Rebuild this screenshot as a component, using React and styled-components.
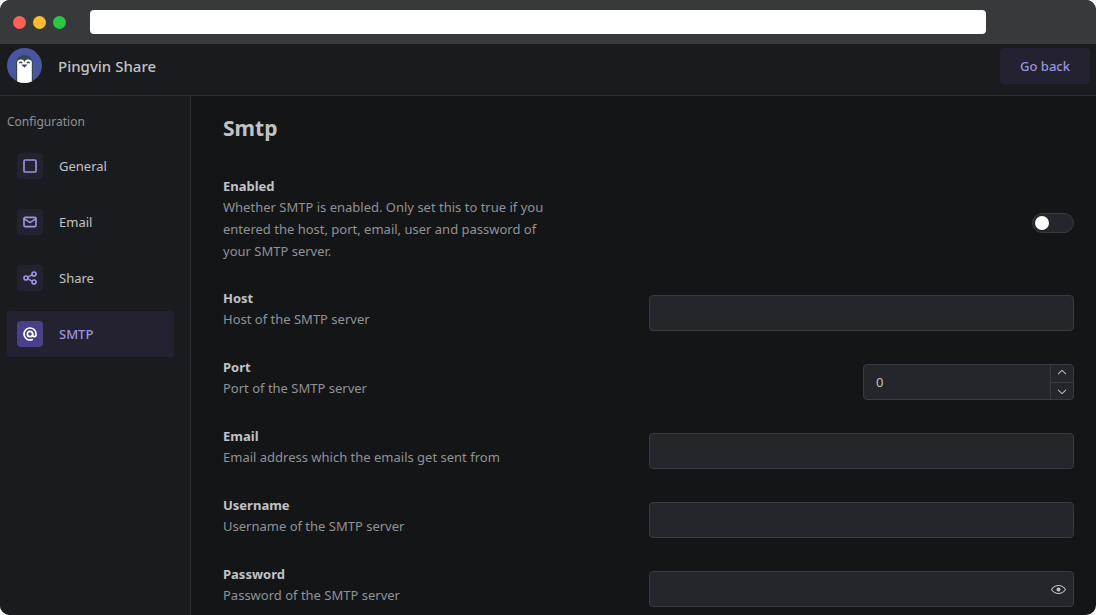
import React, { useState } from "react";
import styled, { createGlobalStyle } from "styled-components";
import { TbSquare, TbMail, TbShare, TbAt } from "react-icons/tb";
import { RxEyeOpen, RxChevronUp, RxChevronDown } from "react-icons/rx";

const GlobalStyle = createGlobalStyle`
  *, *::before, *::after { box-sizing: border-box; }
  body {
    margin: 0;
    background: #f4f4f4;
    color: #c1c2c5;
    font-family: "Noto Sans", "Open Sans", sans-serif;
    font-size: 13px;
    line-height: 22px;
  }
  h1, h2, p { margin: 0; }
  button, input { font: inherit; color: inherit; }
`;

const Window = styled.div`
  display: flex;
  flex-direction: column;
  min-height: 100vh;
  border-radius: 10px;
  overflow: hidden;
  background: #141517;
`;

const TitleBar = styled.div`
  display: flex;
  align-items: center;
  height: 44px;
  padding: 0 110px 0 13px;
  background: #38393a;
`;

const Lights = styled.div`
  display: flex;
  gap: 7px;
  margin-right: 24px;
`;

const Light = styled.span`
  width: 13px;
  height: 13px;
  border-radius: 50%;
  background: ${(p) => p.$color};
`;

const Address = styled.input`
  flex: 1;
  min-width: 0;
  height: 24px;
  padding: 0 8px;
  border: 0;
  border-radius: 4px;
  background: #fff;
  color: #222;
`;

const Header = styled.header`
  display: flex;
  align-items: flex-start;
  justify-content: space-between;
  padding: 4px 6px 11px 7px;
  background: #1a1b1e;
  border-bottom: 1px solid #2c2e33;
`;

const Brand = styled.a`
  display: flex;
  align-items: center;
  gap: 16px;
  color: inherit;
  text-decoration: none;
  font-size: 15px;
  font-weight: 500;
`;

const BackButton = styled.button`
  height: 36px;
  padding: 0 20px;
  border: 0;
  border-radius: 4px;
  background: #242231;
  color: #9a95de;
  font-weight: 500;
`;

const Body = styled.div`
  display: flex;
  flex: 1;
`;

const Sidebar = styled.nav`
  flex: 0 0 191px;
  padding: 15px 16px 15px 7px;
  background: #1a1b1e;
  border-right: 1px solid #2c2e33;
`;

const SidebarLabel = styled.p`
  margin-bottom: 10px;
  color: #909296;
  font-size: 12px;
`;

const NavList = styled.div`
  display: flex;
  flex-direction: column;
  gap: 10px;
`;

const NavItem = styled.a`
  display: flex;
  align-items: center;
  gap: 16px;
  height: 46px;
  padding: 0 10px;
  border-radius: 4px;
  text-decoration: none;
  background: ${(p) => (p.$active ? "#242231" : "transparent")};
  color: ${(p) => (p.$active ? "#9a95de" : "#c1c2c5")};
  font-weight: ${(p) => (p.$active ? 500 : 400)};
`;

const NavIcon = styled.span`
  display: grid;
  place-items: center;
  width: 26px;
  height: 26px;
  border-radius: 4px;
  background: ${(p) => (p.$active ? "#474189" : "#242231")};
  color: ${(p) => (p.$active ? "#ffffff" : "#9a95de")};
`;

const Main = styled.main`
  flex: 1;
  min-width: 0;
  padding: 17px 22px 8px 32px;
`;

const Title = styled.h1`
  margin-bottom: 33px;
  font-size: 21px;
  line-height: 30px;
  font-weight: 700;
`;

const Settings = styled.form`
  display: flex;
  flex-direction: column;
  gap: 26px;
`;

const Row = styled.div`
  display: flex;
  align-items: center;
  justify-content: space-between;
`;

const Info = styled.div`
  align-self: flex-start;
  width: 40%;
`;

const FieldName = styled.label`
  display: block;
  font-weight: 700;
  line-height: 20px;
`;

const Description = styled.p`
  color: #909296;
`;

const Control = styled.div`
  display: flex;
  justify-content: flex-end;
  width: 50%;
  padding-top: 7px;
`;

const Field = styled.div`
  display: flex;
  width: ${(p) => (p.$narrow ? "211px" : "100%")};
  height: 36px;
  border: 1px solid #373a40;
  border-radius: 4px;
  background: #25262b;
  overflow: hidden;
`;

const TextInput = styled.input`
  flex: 1;
  min-width: 0;
  padding: 0 12px;
  border: 0;
  outline: 0;
  background: transparent;
`;

const Steppers = styled.div`
  display: flex;
  flex-direction: column;
  width: 23px;
  border-left: 1px solid #373a40;
`;

const Stepper = styled.button`
  display: grid;
  place-items: center;
  flex: 1;
  padding: 0;
  border: 0;
  background: transparent;
  & + & { border-top: 1px solid #373a40; }
`;

const RevealButton = styled.button`
  display: grid;
  place-items: center;
  width: 30px;
  padding: 0;
  border: 0;
  background: transparent;
`;

const Switch = styled.input`
  appearance: none;
  display: flex;
  align-items: center;
  width: 42px;
  height: 20px;
  margin: 0;
  padding: 0 2px;
  border: 1px solid #373a40;
  border-radius: 10px;
  background: #25262b;
  &::before {
    content: "";
    width: 14px;
    height: 14px;
    border-radius: 50%;
    background: #fff;
  }
  &:checked { justify-content: flex-end; background: #474189; }
`;

function Logo() {
  return (
    <svg width="35" height="35" viewBox="0 0 35 35" aria-hidden="true">
      <defs>
        <clipPath id="disc">
          <circle cx="17.5" cy="17.5" r="17.5" />
        </clipPath>
      </defs>
      <g clipPath="url(#disc)">
        <rect width="35" height="35" fill="#4a55a2" />
        <path d="M9 36V15.500a8.500 8.500 0 0 1 17 0V36z" fill="#37474f" />
        <path d="M10.200 36V15.800a3.600 3.600 0 0 1 7.300-1.200a3.600 3.600 0 0 1 7.300 1.200V36z" fill="#fff" />
        <path d="M12.200 15.200q1.500-1.900 3 0M19.800 15.200q1.500-1.900 3 0" fill="none" stroke="#37474f" strokeWidth="1.3" />
        <path d="M14.500 16.400h6l-3 3.400z" fill="#3f3a8a" />
      </g>
    </svg>
  );
}

const navItems = [
  { name: "General", Icon: TbSquare },
  { name: "Email", Icon: TbMail },
  { name: "Share", Icon: TbShare },
  { name: "SMTP", Icon: TbAt, active: true },
];

function Setting({ id, name, description, children }) {
  return (
    <Row>
      <Info>
        <FieldName htmlFor={id}>{name}</FieldName>
        <Description>{description}</Description>
      </Info>
      <Control>{children}</Control>
    </Row>
  );
}

export default function App() {
  const [port, setPort] = useState(0);
  const [reveal, setReveal] = useState(false);

  return (
    <>
      <GlobalStyle />
      <Window>
        <TitleBar>
          <Lights>
            <Light $color="#ff5f57" />
            <Light $color="#febc2e" />
            <Light $color="#28c840" />
          </Lights>
          <Address type="text" aria-label="Address" />
        </TitleBar>
        <Header>
          <Brand href="#home">
            <Logo />
            Pingvin Share
          </Brand>
          <BackButton type="button">Go back</BackButton>
        </Header>
        <Body>
          <Sidebar>
            <SidebarLabel>Configuration</SidebarLabel>
            <NavList>
              {navItems.map(({ name, Icon, active }) => (
                <NavItem key={name} href={`#${name.toLowerCase()}`} $active={active}>
                  <NavIcon $active={active}>
                    <Icon size={16} strokeWidth={2.5} />
                  </NavIcon>
                  {name}
                </NavItem>
              ))}
            </NavList>
          </Sidebar>
          <Main>
            <Title>Smtp</Title>
            <Settings>
              <Setting
                id="enabled"
                name="Enabled"
                description="Whether SMTP is enabled. Only set this to true if you entered the host, port, email, user and password of your SMTP server."
              >
                <Switch id="enabled" type="checkbox" />
              </Setting>
              <Setting id="host" name="Host" description="Host of the SMTP server">
                <Field>
                  <TextInput id="host" type="text" />
                </Field>
              </Setting>
              <Setting id="port" name="Port" description="Port of the SMTP server">
                <Field $narrow>
                  <TextInput
                    id="port"
                    type="text"
                    inputMode="numeric"
                    value={port}
                    onChange={(e) => setPort(Number(e.target.value) || 0)}
                  />
                  <Steppers>
                    <Stepper type="button" aria-label="Increase" onClick={() => setPort(port + 1)}>
                      <RxChevronUp size={14} />
                    </Stepper>
                    <Stepper type="button" aria-label="Decrease" onClick={() => setPort(port - 1)}>
                      <RxChevronDown size={14} />
                    </Stepper>
                  </Steppers>
                </Field>
              </Setting>
              <Setting id="email" name="Email" description="Email address which the emails get sent from">
                <Field>
                  <TextInput id="email" type="text" />
                </Field>
              </Setting>
              <Setting id="username" name="Username" description="Username of the SMTP server">
                <Field>
                  <TextInput id="username" type="text" />
                </Field>
              </Setting>
              <Setting id="password" name="Password" description="Password of the SMTP server">
                <Field>
                  <TextInput id="password" type={reveal ? "text" : "password"} />
                  <RevealButton type="button" aria-label="Show password" onClick={() => setReveal(!reveal)}>
                    <RxEyeOpen size={15} />
                  </RevealButton>
                </Field>
              </Setting>
            </Settings>
          </Main>
        </Body>
      </Window>
    </>
  );
}
